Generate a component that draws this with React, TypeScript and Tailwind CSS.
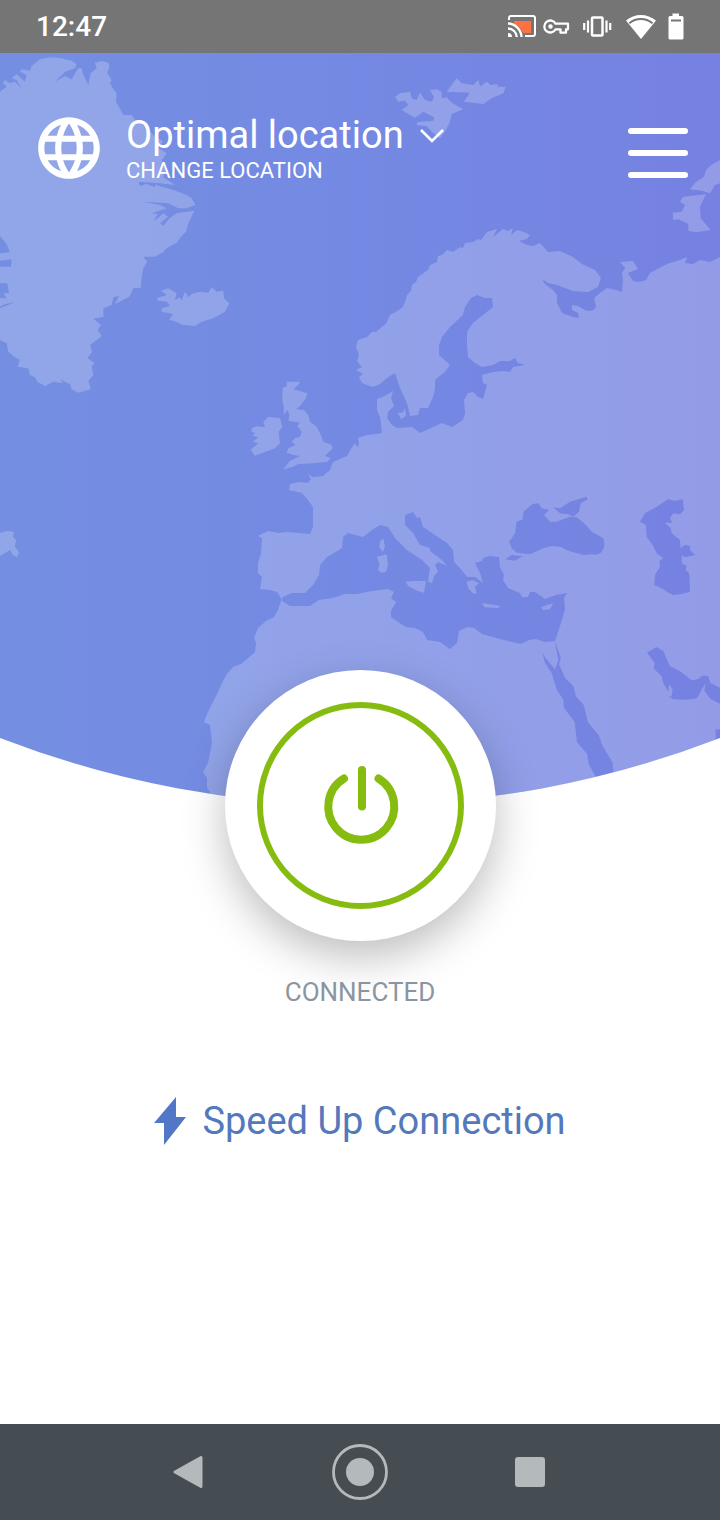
import { useId } from "react";
import { MdLanguage } from "react-icons/md";

function StatusBar() {
  return (
    <header className="flex h-[53px] items-center justify-between bg-[#757575] pr-8 pl-9 text-white">
      <time className="text-[28px] leading-8 font-medium">12:47</time>
      <div className="flex items-center gap-1" aria-hidden="true">
        <svg className="h-[30px] w-[30px]" viewBox="0 0 30 30">
          <path d="M6 9h17v12h-8C13 16 10 13 6 12z" fill="#ff7043" />
          <path
            d="M1 8V6q0-2 2-2h22q2 0 2 2v16q0 2-2 2h-8"
            fill="none"
            stroke="#fff"
            strokeWidth="2"
          />
          <path
            d="M0 11.5A14 14 0 0 1 13.5 25M0 16.5A9 9 0 0 1 8.800 25"
            fill="none"
            stroke="#fff"
            strokeWidth="2.300"
          />
          <path d="M0 21a4 4 0 0 1 4 4H0z" fill="#fff" />
        </svg>
        <svg className="h-[30px] w-8" viewBox="0 0 32 30">
          <path
            d="M13.600 11.700A6 6 0 1 0 13.600 17.300H18.500V20.700H24V17.300H26V11.700Z"
            fill="none"
            stroke="#fff"
            strokeWidth="2.300"
            strokeLinejoin="round"
          />
          <circle cx="8.500" cy="14.500" r="2.200" fill="#fff" />
        </svg>
        <svg className="h-[30px] w-[38px]" viewBox="0 0 38 30">
          <rect x="14" y="5.500" width="10.500" height="18" rx="1" fill="none" stroke="#fff" strokeWidth="2.500" />
          <path d="M6.200 11v7M10 8.500v12M28.500 8.500v12M32.200 11v7" stroke="#fff" strokeWidth="2.200" />
        </svg>
        <svg className="h-[30px] w-10" viewBox="0 0 40 30">
          <path d="M6 8.500C14.500 1 27 1 36 8.500L21 27z" fill="#fff" />
          <path d="M9.300 11.200C16 5.700 25.500 5.700 32.500 11.200" fill="none" stroke="#757575" strokeWidth="2" />
        </svg>
        <svg className="h-[30px] w-6" viewBox="0 0 24 30">
          <path d="M8.500 1.500h6.500V4h3q1.500 0 1.500 1.500V26q0 1.500-1.500 1.500H6Q4.500 27.500 4.500 26V5.500Q4.500 4 6 4h2.500z" fill="#fff" />
          <path d="M7 7.500h10v2H7z" fill="#757575" />
        </svg>
      </div>
    </header>
  );
}

function WorldMap() {
  const id = useId();
  const sea = `${id}sea`;
  const land = `${id}land`;
  const globe = `${id}globe`;
  return (
    <svg
      className="col-start-1 row-start-1 h-[752px] w-full"
      viewBox="0 53 720 752"
      preserveAspectRatio="none"
      aria-hidden="true"
    >
      <defs>
        <linearGradient id={sea}>
          <stop offset="0" stopColor="#748fe2" />
          <stop offset="0.500" stopColor="#7489e3" />
          <stop offset="1" stopColor="#7681e1" />
        </linearGradient>
        <clipPath id={globe}>
          <path d="M0 53H720V738A1000 1000 0 0 1 0 738Z" />
        </clipPath>
        <mask id={land} maskUnits="userSpaceOnUse" x="0" y="53" width="720" height="752">
          <g fill="#fff">
            {/* Eurasia and Africa */}
            <path d="M210 820L210 792L207 788L207 778L203 772L208 763L212 743L210 725L204 722L207 714L213 702L218 692L222 683L227 674L233 667L241 664L247 659L255 652L256 643L254 638L258 628L266 621L274 617L278 610L281 601L281 598L277 592L270 590L260 589L262 577L258 573L258 563L261 553L262 538L258 536L268 531L278 533L287 532L299 533L310 534L313 527L313 507L308 500L302 493L289 490L290 484L299 482L308 483L311 479L308 474L313 477L323 476L330 470L333 462L347 456L351 449L355 443L357 447L359 445L358 438L367 435L377 434L382 433L381 424L380 417L377 410L377 399L385 396L393 391L391 398L394 406L388 412L387 418L392 425L397 428L412 427L420 433L431 428L442 423L452 427L463 420L465 413L464 400L468 393L473 392L478 397L483 399L487 385L483 383L482 375L493 372L503 371L510 372L513 367L525 365L518 363L515 358L510 361L500 361L493 365L482 367L475 363L468 357L467 345L467 335L468 330L473 323L483 315L493 307L492 298L485 298L477 295L471 298L465 307L463 315L450 327L442 337L439 345L439 355L450 365L445 372L437 378L435 380L435 389L433 397L428 408L420 408L418 415L410 416L407 403L400 388L395 373L387 378L380 384L373 387L367 385L362 383L359 377L363 374L356 370L362 367L357 361L359 355L356 347L358 340L367 337L372 332L376 332L383 326L386 324L390 315L397 311L402 308L405 302L407 295L411 291L412 285L416 282L418 277L428 270L430 265L437 262L438 256L442 255L447 250L453 252L460 247L463 248L465 243L473 242L478 239L481 240L487 232L497 229L493 237L503 229L508 231L513 228L511 235L517 230L524 232L530 235L527 239L519 241L527 245L533 246L540 243L548 252L560 251L573 257L582 264L595 270L601 278L598 287L588 292L573 291L557 285L548 283L542 279L545 284L553 290L557 295L557 303L562 313L573 317L579 318L578 313L572 310L572 305L578 306L585 310Q594 313 596 306L594 298L600 293L607 288L616 290L622 292L623 280L622 273L625 268L620 262L633 261L638 269L628 273L633 281Q641 283 646 280L650 273L667 264L680 260L687 257L685 263L693 264L700 260L710 262L720 257V820Z" />
            {/* Greenland and Iceland */}
            <g transform="translate(0 50) scale(.33333)">
              <path d="M0 125L20 110L8 98L15 90L30 100L45 95L65 115L50 90L35 85L50 72L75 95L80 75L60 65L65 58L90 62L95 48L120 28L150 22L180 24L215 32L230 42L225 55L195 65L180 80L165 95L195 78L215 88L225 70L235 55L245 55L250 75L265 104L272 70L290 55L285 38L305 33L326 38L328 52L322 70L335 90L330 100L343 122L350 130L348 155L370 195L395 195L405 210L425 212L440 230L460 255L490 275L470 290L500 310L485 330L495 360L490 382L525 405L480 400L415 395L420 408L440 402L465 412L465 404L520 420L560 435L575 445L587 465L560 475L535 475L505 460L430 455L480 465L500 475L455 490L473 492L460 515L490 490L504 500L480 520L490 527L510 503L530 490L583 482L565 520L558 545L543 560L530 578L500 595L490 606L465 620L430 620L442 635L430 655L425 680L422 713L400 715L388 740L345 762L357 738L340 742L335 765L310 775L310 800L280 806L303 825L293 840L305 858L290 870L270 885L276 905L262 925L283 938L275 950L280 975L265 992L272 1018L235 1028L215 1018L210 1003L180 988L190 1000L160 995L135 1008L112 995L105 982L90 975L85 955L53 950L60 930L42 920L25 905L20 880L0 870V825L20 845L42 840L68 865L40 855L25 860L45 873L30 878L0 830V775L45 757L15 762L0 770V745L20 745L10 730L27 730L22 700L0 700V650L33 650L35 628L0 632V610L30 607L20 583L0 558Z" />
              <path d="M470 745L500 735L483 722L505 715L530 730L525 750L540 742L545 752L555 725L565 742L575 732L600 725L625 728L635 712L650 725L670 722L672 745L688 760L675 785L640 805L605 815L585 828L550 825L520 812L507 810L520 792L485 785L485 775L510 768L500 755L475 752Z" />
            </g>
            <path d="M0 533L7 531L14 532L13 537L16 540L15 547L19 552L17 557L13 555L10 550L0 556Z" />
            {/* Britain, Ireland and the Danish islands */}
            <g transform="translate(220 300) scale(.33333)">
              <path d="M95 385L110 379L135 382L130 365L145 350L180 355L187 380L176 395L180 430L165 445L105 467L92 450L102 440L115 430L98 425L115 412L98 407L105 398L95 395Z" />
              <path d="M200 245L240 245L235 255L220 268L262 280L258 295L240 318L228 328L252 330L265 345L270 365L290 380L300 400L310 425L335 435L338 445L315 468L332 475L322 485L280 490L235 492L220 500L190 508L210 483L240 468L220 465L200 458L205 445L227 435L215 425L225 415L240 410L245 395L232 378L240 368L205 362L208 345L203 330L190 345L192 325L187 300L188 265L200 258Z" />
              <path d="M533 338L548 338L555 325L558 347L543 357Z" />
            </g>
            {/* Svalbard and Novaya Zemlya */}
            <g transform="translate(340 60) scale(.33333)">
              <path d="M165 110L180 100L210 95L215 115L230 120L240 98L255 120L275 125L282 112L270 90L290 88L305 95L305 115L320 112L335 128L370 148L335 162L330 185L318 210L300 235L275 215L260 198L230 196L232 186L280 182L282 172L250 155L225 173L185 150L205 135L195 122L175 125Z" />
              <path d="M320 95L350 55L365 70L400 75L415 60L420 80L440 65L452 75L470 72L475 80L497 80L490 100L455 115L430 132L372 125L390 98Z" />
              <path d="M1140 300L1110 318L1098 330L1092 350L1065 368L1050 388L1085 392L1110 400L1125 375L1140 370Z" />
              <path d="M1030 410L1098 403L1080 440L1082 475L1112 510L1070 517L1045 512L1045 492L1015 478L1000 480L998 458L1025 455L1035 435L1020 425Z" />
            </g>
          </g>
          {/* Mediterranean */}
          <path
            fill="#000"
            d="M281 600L283 597L292 593L305 593L313 585L319 575L320 565L327 557L334 553L342 548L343 537L348 533L363 537L372 530L380 525L388 527L395 538L407 550L422 560L430 568L428 582L432 583L434 576L438 572L435 565L438 562L447 566L442 560L430 551L430 548L420 545L413 533L405 525L405 515L413 512L417 518L420 517L423 527L435 535L447 543L453 550L454 562L460 568L467 577L475 577L483 583L480 573L475 563L482 561L483 558L490 556L499 557L500 567L504 575L503 580L508 588L520 593L522 597L528 597L530 592L535 592L545 599L556 595L567 593L564 598L565 609L561 623L555 641L545 642L536 639L529 640L521 644L500 639L482 634L474 628L467 627L459 631L457 643L450 649L440 642L427 640L423 632L415 628L406 627L398 622L391 617L391 611L396 602L391 598L394 592L388 589L372 591L357 594L345 594L333 598L319 600L310 606L300 606L290 606L282 601Z"
          />
          <g transform="translate(220 300) scale(.33333)" fill="#fff">
            <path d="M490 715L495 740L488 757L478 740L480 725Z" />
            <path d="M470 770L500 763L504 795L498 815L485 818L475 812L478 790Z" />
            <path d="M556 845L580 843L618 843L612 878L590 872L565 858Z" />
          </g>
          <g transform="translate(460 320) scale(.33333)">
            <g fill="#fff">
              <path d="M20 785L38 780L57 790L45 800L50 822L38 820L25 805Z" />
              <path d="M65 850L90 853L120 858L115 864L75 862Z" />
              <path d="M243 862L260 855L280 850L270 868L250 870Z" />
            </g>
            <g fill="#000">
              <path d="M148 665L165 640L170 605L188 598L190 575L218 552L235 550L245 565L268 570L252 585L270 605L290 605L330 590L350 592L375 612L395 635L430 655Q438 680 425 695Q415 707 395 703L370 705L325 692L300 680L275 678L250 685L210 703L170 698L155 685Z" />
              <path d="M280 562L300 565L330 545L380 530L383 538L362 550L357 575L340 590L325 583L300 580Z" />
              <path d="M135 718L155 705L188 708L165 722Z" />
              <path d="M540 605L555 580L590 560L625 537L645 543L668 538L672 570L660 583L640 580L630 595L637 608L615 608L632 625L635 640L660 660L662 685L675 675L690 678L690 690L705 705L675 712L665 705L665 730L680 738L677 750L688 760L690 815L665 822L640 825L625 818L610 808L583 795L585 765L600 740L598 722L610 715L590 700L578 675L560 650L558 615Z" />
            </g>
          </g>
          {/* Red Sea and Persian Gulf */}
          <g transform="translate(190 580) scale(.338)" fill="#000">
            <path d="M1042 213L1050 228L1080 265L1090 235L1078 180L1097 228L1092 250L1110 290L1135 315L1142 345L1165 370L1177 420L1210 460L1220 490L1250 540L1256 600L1210 600L1180 545L1175 515L1145 480L1138 420L1106 378L1105 355L1085 325L1070 275L1050 245Z" />
            <path d="M1352 215L1380 198L1400 210L1420 255L1450 270L1485 297L1505 292L1515 283L1532 283L1540 305L1575 322V370L1540 352L1522 328L1525 305L1500 350L1470 354L1430 353L1415 345L1425 345L1428 325L1418 307L1415 330L1400 305L1395 285L1372 262L1375 245Z" />
            <path d="M1555 442H1575V478H1555Z" />
          </g>
        </mask>
      </defs>
      <g clipPath={`url(#${globe})`}>
        <rect y="53" width="720" height="752" fill={`url(#${sea})`} />
        <rect y="53" width="720" height="752" fill="#fff" fillOpacity="0.210" mask={`url(#${land})`} />
      </g>
    </svg>
  );
}

function LocationBar() {
  return (
    <div className="relative col-start-1 row-start-1 flex items-start justify-between self-start px-8 pt-[58px] text-white">
      <button type="button" className="flex items-center gap-5 text-left">
        <MdLanguage className="h-[74px] w-[74px]" aria-hidden="true" />
        <span className="flex flex-col pt-0.5">
          <span className="flex items-center gap-4 text-[38px] leading-[44px]">
            Optimal location
            <svg className="h-4 w-6" viewBox="0 0 24 16" fill="none" aria-hidden="true">
              <path d="M1 3L12 14L23 3" stroke="currentColor" strokeWidth="2.600" />
            </svg>
          </span>
          <span className="text-[22px] leading-7">CHANGE LOCATION</span>
        </span>
      </button>
      <button type="button" aria-label="Menu" className="mt-4">
        <svg className="h-[52px] w-[60px]" viewBox="0 0 60 52" aria-hidden="true">
          <path d="M3 4H57M3 26H57M3 48H57" stroke="currentColor" strokeWidth="6" strokeLinecap="round" />
        </svg>
      </button>
    </div>
  );
}

function PowerButton() {
  return (
    <button
      type="button"
      aria-label="Disconnect"
      className="relative -mt-[135px] rounded-full bg-white shadow-[0_16px_44px_rgba(0,0,0,0.26)]"
    >
      <svg className="h-[271px] w-[271px]" viewBox="0 0 271 271" fill="none" stroke="#86bc10" aria-hidden="true">
        <circle cx="135.500" cy="135.500" r="100.500" strokeWidth="6" />
        <path
          d="M119 108.500A33 33 0 1 0 153.500 108.500M137 100V136.500"
          strokeWidth="8"
          strokeLinecap="round"
        />
      </svg>
    </button>
  );
}

function NavigationBar() {
  return (
    <nav className="flex h-24 items-center justify-center gap-[115px] bg-[#454d52] text-[#b4b9bb]">
      <button type="button" aria-label="Back">
        <svg className="h-14 w-14" viewBox="0 0 56 56" aria-hidden="true">
          <path
            d="M14 28L40 13.500V42.500Z"
            fill="currentColor"
            stroke="currentColor"
            strokeWidth="3"
            strokeLinejoin="round"
          />
        </svg>
      </button>
      <button type="button" aria-label="Home">
        <svg className="h-14 w-14" viewBox="0 0 56 56" aria-hidden="true">
          <circle cx="28" cy="28" r="26.500" fill="none" stroke="currentColor" strokeWidth="2.800" />
          <circle cx="28" cy="28" r="14" fill="currentColor" />
        </svg>
      </button>
      <button type="button" aria-label="Recent apps">
        <svg className="h-14 w-14" viewBox="0 0 56 56" aria-hidden="true">
          <rect x="12" y="13" width="30" height="30" rx="3" fill="currentColor" />
        </svg>
      </button>
    </nav>
  );
}

export default function App() {
  return (
    <div className="flex min-h-screen flex-col bg-white font-[Roboto,sans-serif]">
      <StatusBar />
      <main className="flex flex-1 flex-col items-center">
        <div className="grid w-full">
          <WorldMap />
          <LocationBar />
        </div>
        <PowerButton />
        <p className="relative mt-[35px] text-[26px] leading-8 text-[#8b95a0]">CONNECTED</p>
        <button type="button" className="mt-[88px] flex items-center gap-4 text-[38px] leading-[50px] text-[#5478bc]">
          <svg className="h-12 w-8" viewBox="0 0 32 48" aria-hidden="true">
            <path d="M22 0V20H32L10 48V26H0Z" fill="#5177c6" />
          </svg>
          Speed Up Connection
        </button>
      </main>
      <NavigationBar />
    </div>
  );
}
